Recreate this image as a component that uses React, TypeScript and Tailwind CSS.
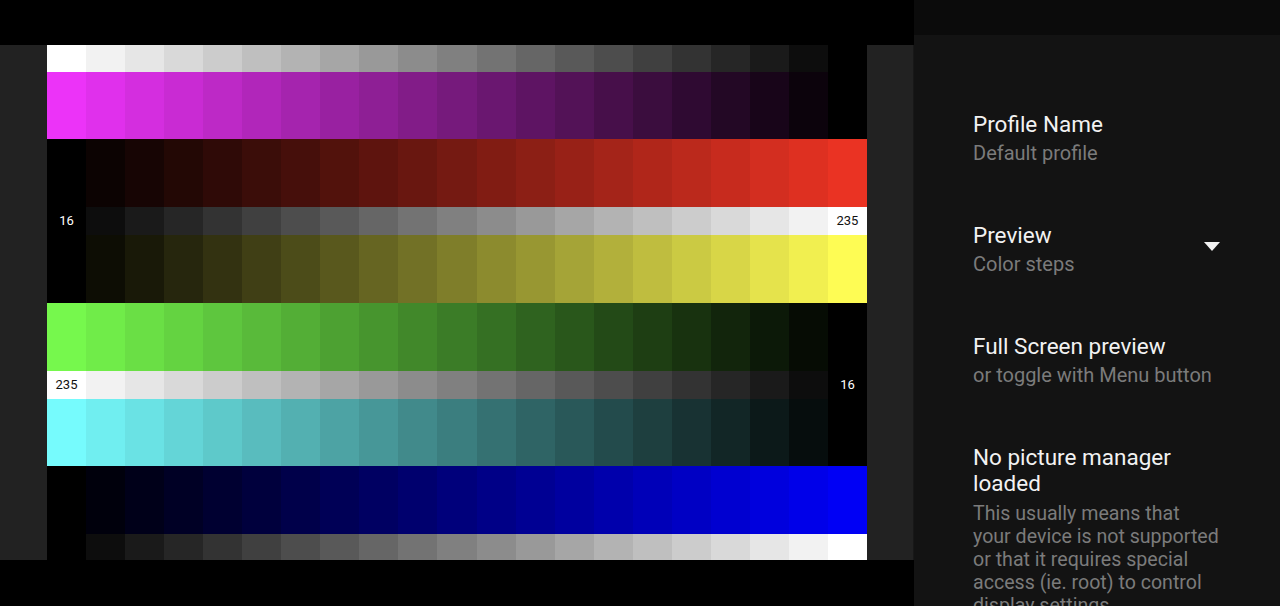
import { Fragment } from "react";

type Row = {
  h: string;
  base: [number, number, number];
  up: boolean;
  left?: string;
  right?: string;
};

// each band ramps from black to its base colour over 21 steps
const STEPS = 21;

const rows: Row[] = [
  { h: "h-[27px]", base: [255, 255, 255], up: false },
  { h: "h-[67px]", base: [236, 51, 248], up: false },
  { h: "h-[68px]", base: [234, 51, 35], up: true },
  { h: "h-[28px]", base: [255, 255, 255], up: true, left: "16", right: "235" },
  { h: "h-[68px]", base: [254, 252, 84], up: true },
  { h: "h-[68px]", base: [118, 248, 77], up: false },
  { h: "h-[28px]", base: [255, 255, 255], up: false, left: "235", right: "16" },
  { h: "h-[67px]", base: [118, 251, 253], up: false },
  { h: "h-[68px]", base: [0, 0, 245], up: true },
  { h: "h-[26px]", base: [255, 255, 255], up: true },
];

function cellColor(row: Row, i: number) {
  const step = row.up ? i : STEPS - 1 - i;
  const k = step / (STEPS - 1);
  const [r, g, b] = row.base;
  return `rgb(${Math.round(r * k)}, ${Math.round(g * k)}, ${Math.round(b * k)})`;
}

function StepRow({ row }: { row: Row }) {
  return (
    <div className={`flex ${row.h}`}>
      {Array.from({ length: STEPS }).map((_, i) => {
        const label = i === 0 ? row.left : i === STEPS - 1 ? row.right : undefined;
        const step = row.up ? i : STEPS - 1 - i;
        return (
          <div
            key={i}
            className="flex flex-1 items-center justify-center"
            style={{ backgroundColor: cellColor(row, i) }}
          >
            {label && (
              <span
                className={`text-[13px] ${step > 10 ? "text-[#111]" : "text-white"}`}
              >
                {label}
              </span>
            )}
          </div>
        );
      })}
    </div>
  );
}

function SettingItem({
  title,
  subtitle,
  dropdown,
}: {
  title: string;
  subtitle: string;
  dropdown?: boolean;
}) {
  return (
    <div className="flex h-[111px] shrink-0 items-center pr-[60px]">
      <div className="flex-1">
        <div className="text-[22.5px] leading-[26px] text-[#f2f2f2]">{title}</div>
        <div className="mt-[5px] text-[20px] leading-[23px] text-[#7b7b7b]">{subtitle}</div>
      </div>
      {dropdown && (
        <svg width="16" height="10" viewBox="0 0 16 10" className="mt-[-4px]">
          <path d="M0 0 H16 L8 9 Z" fill="#f2f2f2" />
        </svg>
      )}
    </div>
  );
}

export default function App() {
  return (
    <div
      className="flex h-[606px] w-[1280px] overflow-hidden bg-black"
      style={{ fontFamily: "Roboto, 'Noto Sans', sans-serif" }}
    >
      {/* preview area */}
      <div className="flex w-[914px] flex-col">
        <div className="h-[45px] bg-black" />
        <div className="flex h-[515px] bg-[#222222]">
          <div className="w-[47px]" />
          <div className="flex w-[820px] flex-col">
            {rows.map((row, idx) => (
              <Fragment key={idx}>
                <StepRow row={row} />
              </Fragment>
            ))}
          </div>
          <div className="w-[46px]" />
          <div className="w-px bg-[#181818]" />
        </div>
        <div className="flex-1 bg-black" />
      </div>

      {/* settings panel */}
      <aside className="flex w-[366px] flex-col overflow-hidden bg-[#131313]">
        <div className="h-[35px] shrink-0 bg-[#0b0b0b]" />
        <div className="flex shrink-0 flex-col pl-[59px] pt-[47px]">
          <SettingItem title="Profile Name" subtitle="Default profile" />
          <SettingItem title="Preview" subtitle="Color steps" dropdown />
          <SettingItem title="Full Screen preview" subtitle="or toggle with Menu button" />
          <div className="shrink-0 pr-[40px] pt-[29px]">
            <div className="text-[22.5px] leading-[26px] text-[#f2f2f2]">
              No picture manager
              <br />
              loaded
            </div>
            <div className="mt-[6px] text-[19.6px] leading-[23px] text-[#7b7b7b]">
              This usually means that
              <br />
              your device is not supported
              <br />
              or that it requires special
              <br />
              access (ie. root) to control
              <br />
              display settings
            </div>
          </div>
        </div>
      </aside>
    </div>
  );
}
